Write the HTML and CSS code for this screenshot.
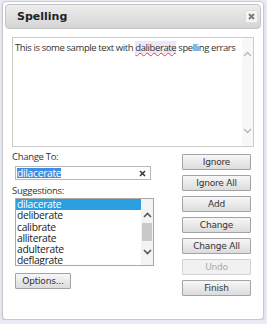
FILE: index.html
```html
<!DOCTYPE html>
<html lang="en">
<head>
    <meta charset="UTF-8">
    <title>Spelling</title>
    <link rel="stylesheet" href="styles.css">
</head>
<body>
    <div class="dialog">
        <div class="titlebar">
            <span class="title">Spelling</span>
            <span class="close">
                <svg width="11" height="11" viewBox="0 0 11 11"><path d="M3 3 L8 8 M8 3 L3 8" stroke="#7a7a7a" stroke-width="2"/></svg>
            </span>
        </div>

        <div class="content">
            <div class="text-box">
                <div class="text">This is some sample text with <span class="misspelled">daliberate</span> spelling errars</div>
                <div class="scroll light">
                    <svg width="9" height="6" viewBox="0 0 9 6"><path d="M1 5 L4.5 1.5 L8 5" fill="none" stroke="#b8b8b8" stroke-width="1.4"/></svg>
                    <svg width="9" height="6" viewBox="0 0 9 6"><path d="M1 1 L4.5 4.5 L8 1" fill="none" stroke="#b8b8b8" stroke-width="1.4"/></svg>
                </div>
            </div>

            <div class="lower">
                <div class="left">
                    <div class="label">Change To:</div>
                    <div class="input">
                        <span class="selected">dilacerate</span>
                        <svg width="7" height="7" viewBox="0 0 7 7"><path d="M1 1 L6 6 M6 1 L1 6" stroke="#333" stroke-width="1.5"/></svg>
                    </div>
                    <div class="label">Suggestions:</div>
                    <div class="list">
                        <div class="items">
                            <div class="item active">dilacerate</div>
                            <div class="item">deliberate</div>
                            <div class="item">calibrate</div>
                            <div class="item">alliterate</div>
                            <div class="item">adulterate</div>
                            <div class="item">deflagrate</div>
                        </div>
                        <div class="list-scroll">
                            <svg class="arrow-up" width="9" height="6" viewBox="0 0 9 6"><path d="M1 5 L4.5 1.5 L8 5" fill="none" stroke="#555" stroke-width="1.6"/></svg>
                            <div class="thumb"></div>
                            <svg class="arrow-down" width="9" height="6" viewBox="0 0 9 6"><path d="M1 1 L4.5 4.5 L8 1" fill="none" stroke="#555" stroke-width="1.6"/></svg>
                        </div>
                    </div>
                    <button class="btn options">Options...</button>
                </div>

                <div class="actions">
                    <button class="btn">Ignore</button>
                    <button class="btn">Ignore All</button>
                    <button class="btn">Add</button>
                    <button class="btn">Change</button>
                    <button class="btn">Change All</button>
                    <button class="btn" disabled>Undo</button>
                    <button class="btn">Finish</button>
                </div>
            </div>
        </div>
    </div>
</body>
</html>
```

FILE: styles.css
```css
body {
    margin: 0;
    background: #e9ecf4;
    font-family: 'Open Sans', sans-serif;
    color: #222;
}

.dialog {
    box-sizing: border-box;
    width: 262px;
    height: 319px;
    margin: 1px 0 0 2px;
    padding: 2px;
    background: #fff;
    border: 1px solid #c9c9c9;
    border-radius: 4px;
    box-shadow: 0 1px 2px rgba(0, 0, 0, 0.18);
}

.titlebar {
    box-sizing: border-box;
    height: 25px;
    display: flex;
    align-items: center;
    justify-content: space-between;
    padding: 0 2px 0 11px;
    border: 1px solid #c4c4c4;
    border-radius: 4px;
    background: linear-gradient(#ededed, #d5d5d5);
}

.title {
    font-family: 'DejaVu Sans', sans-serif;
    font-weight: bold;
    font-size: 11px;
    color: #222;
}

.close {
    box-sizing: border-box;
    width: 13px;
    height: 13px;
    display: flex;
    align-items: center;
    justify-content: center;
    background: #f5f5f5;
    border: 1px solid #dddddd;
    border-radius: 2px;
}

.content {
    padding: 8px 7px 0 7px;
}

.text-box {
    box-sizing: border-box;
    height: 110px;
    display: flex;
    border: 1px solid #cbcbcb;
}

.text {
    flex: 1;
    padding: 3px 0 0 2px;
    font-size: 9.5px;
    letter-spacing: -0.4px;
    line-height: 13px;
    color: #333;
}

.misspelled {
    background: #e9e9fb;
    text-decoration: underline wavy #e04040;
    text-decoration-thickness: 1px;
    text-underline-offset: 1px;
}

.scroll {
    width: 11px;
    display: flex;
    flex-direction: column;
    justify-content: space-between;
    align-items: center;
    padding: 13px 0 12px;
    background: #f8f8f8;
}

.lower {
    display: flex;
    justify-content: space-between;
}

.left {
    width: 143px;
}

.label {
    margin-top: 3px;
    font-size: 9.5px;
    letter-spacing: -0.3px;
    line-height: 13px;
    color: #333;
}

.input {
    box-sizing: border-box;
    width: 136px;
    height: 14px;
    margin: 3px 0 4px 3px;
    padding: 0 4px 0 1px;
    display: flex;
    align-items: center;
    justify-content: space-between;
    border: 1px solid #b8b8b8;
}

.selected {
    background: #3c8fe3;
    color: #fff;
    font-size: 10.3px;
    letter-spacing: -0.3px;
    line-height: 10px;
}

.list {
    box-sizing: border-box;
    width: 139px;
    height: 68px;
    margin: 1px 0 0 3px;
    display: flex;
    border: 1px solid #a9a9a9;
    overflow: hidden;
}

.items {
    flex: 1;
}

.item {
    height: 11.3px;
    padding-left: 1px;
    font-size: 10.3px;
    letter-spacing: -0.3px;
    line-height: 11.3px;
    color: #222;
}

.item.active {
    background: #2b9fe0;
    color: #fff;
}

.list-scroll {
    width: 12px;
    display: flex;
    flex-direction: column;
    align-items: center;
    padding-top: 13px;
    background: #f3f3f3;
}

.thumb {
    width: 10px;
    height: 18px;
    margin-top: 5px;
    background: #c9c9c9;
}

.arrow-down {
    margin-top: 8px;
}

.btn {
    box-sizing: border-box;
    display: block;
    height: 16px;
    padding: 0;
    font-family: 'DejaVu Sans', sans-serif;
    font-size: 9px;
    letter-spacing: -0.2px;
    color: #333;
    border: 1px solid #a3a3a3;
    border-radius: 1px;
    background: linear-gradient(#f7f7f7, #dcdcdc);
}

.btn:disabled {
    color: #a8a8a8;
    border-color: #d2d2d2;
    background: #f1f1f1;
}

.options {
    width: 56px;
    margin: 7px 0 0 3px;
}

.actions {
    display: flex;
    flex-direction: column;
    gap: 5px;
    padding: 7px 3px 0 0;
}

.actions .btn {
    width: 69px;
}
```
